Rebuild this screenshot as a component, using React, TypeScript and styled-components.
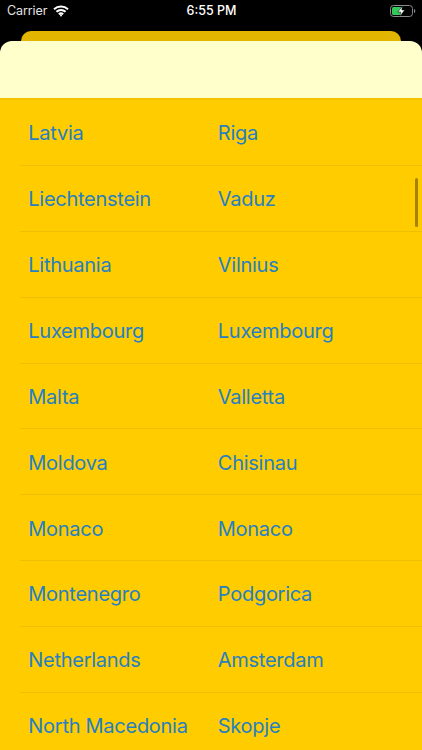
import React from 'react';
import styled, { createGlobalStyle } from 'styled-components';

const Global = createGlobalStyle`
  html, body { margin: 0; padding: 0; background: #000; }
  #root { width: 422px; height: 750px; overflow: hidden; }
`;

const Screen = styled.div`
  position: relative;
  width: 422px;
  height: 750px;
  overflow: hidden;
  background: #000;
  display: flex;
  flex-direction: column;
  font-family: Inter, "Liberation Sans", sans-serif;
`;

const StatusBar = styled.div`
  height: 31px;
  flex: none;
  display: grid;
  grid-template-columns: 1fr auto 1fr;
  align-items: center;
  padding: 0 6px 10px 7px;
  box-sizing: border-box;
  color: #fff;
  font-size: 12.5px;
`;

const StatusLeft = styled.div`
  display: flex;
  align-items: center;
  gap: 6px;
  color: #e4e4e4;
  letter-spacing: -0.1px;
`;

const StatusTime = styled.div`
  font-weight: 500;
  font-size: 12.5px;
`;

const StatusRight = styled.div`
  display: flex;
  justify-content: flex-end;
`;

const BackCard = styled.div`
  flex: none;
  height: 10px;
  margin: 0 21px;
  background: #e2b500;
  border-radius: 10px 10px 0 0;
`;

const Sheet = styled.div`
  flex: none;
  height: 57px;
  background: #ffffcc;
  border-radius: 12px 12px 0 0;
  border-bottom: 2px solid #f4c400;
`;

const List = styled.div`
  flex: 1;
  min-height: 0;
  background: #ffcc00;
  overflow: hidden;
`;

const Row = styled.div`
  height: 65.9px;
  box-sizing: border-box;
  margin-left: 20px;
  padding: 1.5px 0 0 8.3px;
  display: grid;
  grid-template-columns: 189.5px 1fr;
  align-items: center;
  border-bottom: 1px solid #eebf05;
  color: #2680c2;
  font-size: 20px;
  font-weight: 400;
  letter-spacing: -0.27px;
`;

const Scrollbar = styled.div`
  position: absolute;
  left: 415px;
  top: 178px;
  width: 3px;
  height: 49px;
  border-radius: 2px;
  background: #a38300;
`;

const data: [string, string][] = [
  ['Latvia', 'Riga'],
  ['Liechtenstein', 'Vaduz'],
  ['Lithuania', 'Vilnius'],
  ['Luxembourg', 'Luxembourg'],
  ['Malta', 'Valletta'],
  ['Moldova', 'Chisinau'],
  ['Monaco', 'Monaco'],
  ['Montenegro', 'Podgorica'],
  ['Netherlands', 'Amsterdam'],
  ['North Macedonia', 'Skopje'],
];

const Wifi = () => (
  <svg width="16" height="12" viewBox="0 0 16 12" fill="none" stroke="#fff" strokeWidth="2">
    <path d="M1 4.200C5 .6 11 .6 15 4.200" />
    <path d="M3.400 6.800c2.700-2.300 6.500-2.300 9.200 0" />
    <path d="M5.800 9.200c1.300-1 3.100-1 4.400 0" />
    <circle cx="8" cy="10.600" r="1" fill="#fff" stroke="none" />
  </svg>
);

const Battery = () => (
  <svg width="26" height="12" viewBox="0 0 26 12" fill="none">
    <rect x="0.5" y="0.5" width="22" height="11" rx="3" stroke="#8a8a8a" />
    <rect x="2" y="2" width="10" height="8" rx="1.500" fill="#34c759" />
    <path d="M24 4v4c.8-.3 1.300-1 1.300-2s-.5-1.700-1.300-2z" fill="#8a8a8a" />
    <path d="M12.500 1 7.800 7h3l-1 4.200L14.800 5h-3z" fill="#fff" stroke="#000" strokeWidth="0.5" />
  </svg>
);

export default function App() {
  return (
    <Screen>
      <Global />
      <StatusBar>
        <StatusLeft>
          <span>Carrier</span>
          <Wifi />
        </StatusLeft>
        <StatusTime>6:55 PM</StatusTime>
        <StatusRight>
          <Battery />
        </StatusRight>
      </StatusBar>
      <BackCard />
      <Sheet />
      <List>
        {data.map(([country, capital]) => (
          <Row key={country}>
            <span>{country}</span>
            <span>{capital}</span>
          </Row>
        ))}
      </List>
      <Scrollbar />
    </Screen>
  );
}
